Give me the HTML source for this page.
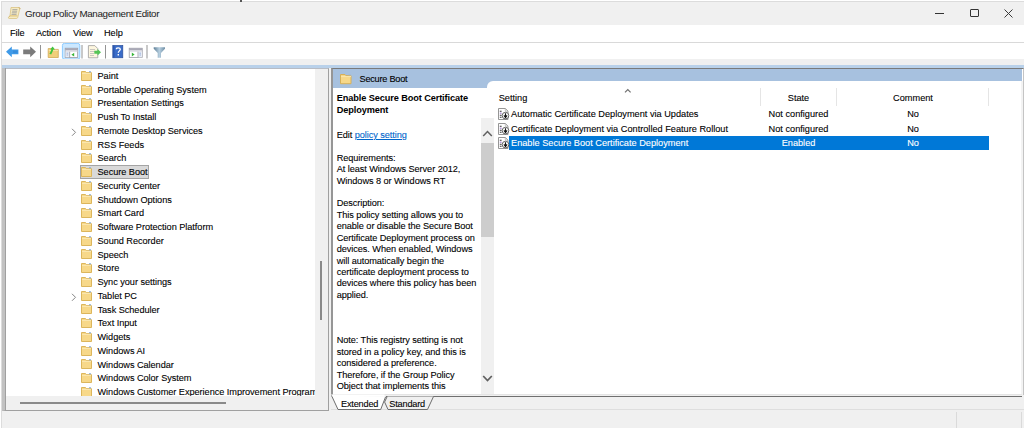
<!DOCTYPE html>
<html><head><meta charset="utf-8">
<style>
*{box-sizing:border-box;margin:0;padding:0}
html,body{width:1024px;height:428px;overflow:hidden;background:#fff;position:relative;font-family:"Liberation Sans",sans-serif;color:#000}
.a{position:absolute}
.t{position:absolute;white-space:nowrap;font-size:9.2px;letter-spacing:-0.05px;line-height:12px;-webkit-text-stroke:0.1px currentColor}
</style></head><body>
<!-- window frame -->
<div class="a" style="left:1px;top:1px;width:1023px;height:427px;background:#f0f0f0;border-left:1px solid #dcdcdc;border-top:1px solid #dcdcdc"></div>
<!-- title bar -->
<div class="a" style="left:2px;top:2px;width:1022px;height:23px;background:#f0f0f0"></div>
<div class="t" style="left:25px;top:7.6px;font-size:9.8px;letter-spacing:-0.34px;color:#1a1a1a;-webkit-text-stroke:0">Group Policy Management Editor</div>
<svg class="a" style="left:7px;top:6px" width="14" height="14" viewBox="7 6 14 14">
 <path d="M11 7.5h7.8c0.8 0 1.2 0.5 1 1.2l-2 8.6c-0.2 0.8 -0.8 1.2 -1.5 1.2H9.2c-0.8 0 -1 -0.6 -0.6 -1.2l1.4 -1.4z" fill="#f6ebc2" stroke="#d5bd78" stroke-width="0.7"/>
 <path d="M8.6 17.3c0.4 -1 1.4 -1.4 2.4 -1.4h6.4" fill="none" stroke="#d9b867" stroke-width="0.9"/>
 <path d="M12.4 9.6h5M12.1 11.2h5M11.8 12.8h5M11.5 14.4h5" stroke="#9a9a9a" stroke-width="0.8"/>
 <path d="M18.6 7.6c1 0 1.6 0.7 1.2 1.6" fill="none" stroke="#c9a55a" stroke-width="0.9"/>
</svg>
<div class="a" style="left:240px;top:0;width:2px;height:2px;background:#555"></div>
<!-- window controls -->
<div class="a" style="left:935px;top:13px;width:9px;height:1px;background:#333"></div>
<div class="a" style="left:970px;top:9px;width:9px;height:8px;border:1px solid #333;border-radius:1px"></div>
<svg class="a" style="left:1004px;top:9px" width="9" height="9"><path d="M0.5 0.5L8.5 8.5M8.5 0.5L0.5 8.5" stroke="#3a3a3a" stroke-width="1"/></svg>
<!-- menu bar -->
<div class="a" style="left:2px;top:25px;width:1022px;height:18px;background:#fff;border-bottom:1px solid #d9d9d9"></div>
<div class="t" style="left:10px;top:27px">File</div>
<div class="t" style="left:36px;top:27px">Action</div>
<div class="t" style="left:73px;top:27px">View</div>
<div class="t" style="left:104px;top:27px">Help</div>
<!-- toolbar -->
<div class="a" style="left:2px;top:43px;width:1022px;height:16px;background:#fff"></div>
<svg class="a" style="left:0;top:43px" width="172" height="17" viewBox="0 43 172 17">
<!-- back arrow -->
<path d="M6 51.8L11.8 46.6V49.6H18.4V54.2H11.8V57.2Z" fill="#3f9ae8"/>
<path d="M13 50.6h4.5v2.5h-4.5z" fill="#2f7fd0" opacity="0.5"/>
<!-- forward arrow -->
<path d="M36 51.8L30.2 46.6V49.6H23.2V54.2H30.2V57.2Z" fill="#7b7b7b"/>
<!-- sep -->
<rect x="40" y="45" width="1" height="13.5" fill="#939393"/>
<!-- folder up -->
<path d="M48.2 48.6h3.5l0.8 0.8h5.8v8.1h-10.1z" fill="#f1cf7a" stroke="#d2aa55" stroke-width="0.8"/>
<path d="M48.8 50.4h9.2" stroke="#f9e5ac" stroke-width="1"/>
<path d="M50.3 54.2C51 52.5 52.2 51.2 52.4 49" stroke="#40c540" stroke-width="2" fill="none"/>
<path d="M50.2 49.6L52.6 46.5L55 49.4Z" fill="#40c540"/>
<!-- highlighted button -->
<rect x="62.4" y="43.4" width="17.4" height="15.8" rx="2" fill="#cce8ff" stroke="#8ccbff" stroke-width="1"/>
<rect x="65.2" y="48.2" width="12.5" height="9.2" fill="#fff" stroke="#8f8f99" stroke-width="0.7"/>
<rect x="65.2" y="48.2" width="12.5" height="2.2" fill="#a9a9b6"/>
<rect x="65.5" y="50.4" width="12" height="1.3" fill="#d6d6de"/>
<rect x="65.6" y="51.8" width="3.6" height="5.4" fill="#e6ecf5"/>
<rect x="69.3" y="51.8" width="0.8" height="5.5" fill="#9a9aa6"/>
<path d="M66.6 53.2h1.6M66.6 55h1.6" stroke="#6f8fcf" stroke-width="0.6"/>
<path d="M74.2 52.8V56.6L71.4 54.7Z" fill="#3ab53a"/>
<!-- sep -->
<rect x="81.5" y="45" width="1" height="13.5" fill="#939393"/>
<!-- export list -->
<path d="M88.4 45.6h6.4l3 3v9.2h-9.4z" fill="#fdf6df" stroke="#9c9c9c" stroke-width="0.8"/>
<path d="M90 49.5h5M90 51.5h5M90 53.5h4M90 55.5h4" stroke="#b5b5b5" stroke-width="0.7"/>
<path d="M94.3 50.8h3.2v-1.8L101 52.3L97.5 55.6v-1.8h-3.2z" fill="#55c455"/>
<!-- sep -->
<rect x="105" y="45" width="1" height="13.5" fill="#939393"/>
<!-- help book -->
<rect x="112.8" y="45.5" width="10" height="12.3" fill="#3a6cc8" stroke="#2a4f9a" stroke-width="0.7"/>
<rect x="113.1" y="45.7" width="1.4" height="11.9" fill="#2a56b0"/>
<path d="M116.3 49.2C116.3 47.3 120.3 47.3 120.3 49.3C120.3 50.8 118.3 51 118.3 52.8" stroke="#fff" stroke-width="1.3" fill="none"/>
<rect x="117.6" y="54" width="1.4" height="1.5" fill="#fff"/>
<!-- action pane -->
<rect x="129.2" y="48.2" width="13" height="9.4" fill="#fff" stroke="#8f8f99" stroke-width="0.7"/>
<rect x="129.2" y="48.2" width="13" height="2.2" fill="#a9a9b6"/>
<rect x="129.5" y="50.4" width="12.5" height="1.3" fill="#d6d6de"/>
<rect x="138.4" y="51.8" width="3.5" height="5.5" fill="#e6ecf5"/>
<rect x="137.6" y="51.8" width="0.8" height="5.6" fill="#9a9aa6"/>
<path d="M139.4 53.2h1.6M139.4 55h1.6" stroke="#6f8fcf" stroke-width="0.6"/>
<path d="M131.8 52.6V56.4L134.6 54.5Z" fill="#3ab53a"/>
<!-- sep -->
<rect x="146.5" y="45" width="1" height="13.5" fill="#939393"/>
<!-- filter -->
<defs><linearGradient id="fg" x1="0" y1="0" x2="1" y2="0"><stop offset="0" stop-color="#5f7f96"/><stop offset="0.5" stop-color="#b7cfe0"/><stop offset="1" stop-color="#6f8ea5"/></linearGradient></defs>
<path d="M153.7 47.2h11.3v1.6l-4 4.2v4.8h-3.3v-4.8l-4-4.2z" fill="url(#fg)"/>
</svg>
<!-- gray strip + blue line -->
<div class="a" style="left:2px;top:59px;width:1022px;height:6px;background:#f0f0f0"></div>
<div class="a" style="left:2px;top:65px;width:1022px;height:3px;background:#b9d1ea"></div>

<!-- TREE PANE -->
<div class="a" style="left:2px;top:68px;width:327px;height:343px;background:#f0f0f0;border:1px solid #a0a0a0;border-left:4px solid #c2c2c2;border-top-color:#b8bcc4"></div>
<div class="a" style="left:5px;top:68px;width:1px;height:343px;background:#a0a0a0"></div>
<div class="a" style="left:6px;top:69px;width:309px;height:327px;background:#fff;overflow:hidden" id="tree"></div>
<div class="a" style="left:6px;top:69px;width:309px;height:327px;overflow:hidden"><div class="a" style="left:-6px;top:-69px;width:1024px;height:428px">
<!-- TREEITEMS -->
<svg class="a" style="left:81.00px;top:70.80px" width="11" height="10"><path d="M0.5 0.5h4l1 1.2h5v7.8h-10z" fill="#f7d889" stroke="#dcb65c"/><path d="M1 2.5h9" stroke="#fae6ae"/><path d="M8 0.8h2" stroke="#7fa7d6"/></svg>
<div class="t" style="left:97.5px;top:70.01px">Paint</div>
<svg class="a" style="left:81.00px;top:84.54px" width="11" height="10"><path d="M0.5 0.5h4l1 1.2h5v7.8h-10z" fill="#f7d889" stroke="#dcb65c"/><path d="M1 2.5h9" stroke="#fae6ae"/><path d="M8 0.8h2" stroke="#7fa7d6"/></svg>
<div class="t" style="left:97.5px;top:83.75px">Portable Operating System</div>
<svg class="a" style="left:81.00px;top:98.28px" width="11" height="10"><path d="M0.5 0.5h4l1 1.2h5v7.8h-10z" fill="#f7d889" stroke="#dcb65c"/><path d="M1 2.5h9" stroke="#fae6ae"/><path d="M8 0.8h2" stroke="#7fa7d6"/></svg>
<div class="t" style="left:97.5px;top:97.49px">Presentation Settings</div>
<svg class="a" style="left:81.00px;top:112.02px" width="11" height="10"><path d="M0.5 0.5h4l1 1.2h5v7.8h-10z" fill="#f7d889" stroke="#dcb65c"/><path d="M1 2.5h9" stroke="#fae6ae"/><path d="M8 0.8h2" stroke="#7fa7d6"/></svg>
<div class="t" style="left:97.5px;top:111.23px">Push To Install</div>
<svg class="a" style="left:81.00px;top:125.76px" width="11" height="10"><path d="M0.5 0.5h4l1 1.2h5v7.8h-10z" fill="#f7d889" stroke="#dcb65c"/><path d="M1 2.5h9" stroke="#fae6ae"/><path d="M8 0.8h2" stroke="#7fa7d6"/></svg>
<svg class="a" style="left:70.5px;top:127.66px" width="6" height="9"><path d="M1 0.8L4.5 4.3L1 7.8" fill="none" stroke="#858585" stroke-width="1"/></svg>
<div class="t" style="left:97.5px;top:124.97px">Remote Desktop Services</div>
<svg class="a" style="left:81.00px;top:139.50px" width="11" height="10"><path d="M0.5 0.5h4l1 1.2h5v7.8h-10z" fill="#f7d889" stroke="#dcb65c"/><path d="M1 2.5h9" stroke="#fae6ae"/><path d="M8 0.8h2" stroke="#7fa7d6"/></svg>
<div class="t" style="left:97.5px;top:138.71px">RSS Feeds</div>
<svg class="a" style="left:81.00px;top:153.24px" width="11" height="10"><path d="M0.5 0.5h4l1 1.2h5v7.8h-10z" fill="#f7d889" stroke="#dcb65c"/><path d="M1 2.5h9" stroke="#fae6ae"/><path d="M8 0.8h2" stroke="#7fa7d6"/></svg>
<div class="t" style="left:97.5px;top:152.45px">Search</div>
<div class="a" style="left:80px;top:165.18px;width:68.5px;height:13.7px;background:#d9d9d9;border:1px solid #a4a4a4"></div>
<svg class="a" style="left:81.00px;top:166.98px" width="11" height="10"><path d="M0.5 0.5h4l1 1.2h5v7.8h-10z" fill="#f7d889" stroke="#dcb65c"/><path d="M1 2.5h9" stroke="#fae6ae"/><path d="M8 0.8h2" stroke="#7fa7d6"/></svg>
<div class="t" style="left:97.5px;top:166.19px">Secure Boot</div>
<svg class="a" style="left:81.00px;top:180.72px" width="11" height="10"><path d="M0.5 0.5h4l1 1.2h5v7.8h-10z" fill="#f7d889" stroke="#dcb65c"/><path d="M1 2.5h9" stroke="#fae6ae"/><path d="M8 0.8h2" stroke="#7fa7d6"/></svg>
<div class="t" style="left:97.5px;top:179.93px">Security Center</div>
<svg class="a" style="left:81.00px;top:194.46px" width="11" height="10"><path d="M0.5 0.5h4l1 1.2h5v7.8h-10z" fill="#f7d889" stroke="#dcb65c"/><path d="M1 2.5h9" stroke="#fae6ae"/><path d="M8 0.8h2" stroke="#7fa7d6"/></svg>
<div class="t" style="left:97.5px;top:193.67px">Shutdown Options</div>
<svg class="a" style="left:81.00px;top:208.20px" width="11" height="10"><path d="M0.5 0.5h4l1 1.2h5v7.8h-10z" fill="#f7d889" stroke="#dcb65c"/><path d="M1 2.5h9" stroke="#fae6ae"/><path d="M8 0.8h2" stroke="#7fa7d6"/></svg>
<div class="t" style="left:97.5px;top:207.41px">Smart Card</div>
<svg class="a" style="left:81.00px;top:221.94px" width="11" height="10"><path d="M0.5 0.5h4l1 1.2h5v7.8h-10z" fill="#f7d889" stroke="#dcb65c"/><path d="M1 2.5h9" stroke="#fae6ae"/><path d="M8 0.8h2" stroke="#7fa7d6"/></svg>
<div class="t" style="left:97.5px;top:221.15px">Software Protection Platform</div>
<svg class="a" style="left:81.00px;top:235.68px" width="11" height="10"><path d="M0.5 0.5h4l1 1.2h5v7.8h-10z" fill="#f7d889" stroke="#dcb65c"/><path d="M1 2.5h9" stroke="#fae6ae"/><path d="M8 0.8h2" stroke="#7fa7d6"/></svg>
<div class="t" style="left:97.5px;top:234.89px">Sound Recorder</div>
<svg class="a" style="left:81.00px;top:249.42px" width="11" height="10"><path d="M0.5 0.5h4l1 1.2h5v7.8h-10z" fill="#f7d889" stroke="#dcb65c"/><path d="M1 2.5h9" stroke="#fae6ae"/><path d="M8 0.8h2" stroke="#7fa7d6"/></svg>
<div class="t" style="left:97.5px;top:248.63px">Speech</div>
<svg class="a" style="left:81.00px;top:263.16px" width="11" height="10"><path d="M0.5 0.5h4l1 1.2h5v7.8h-10z" fill="#f7d889" stroke="#dcb65c"/><path d="M1 2.5h9" stroke="#fae6ae"/><path d="M8 0.8h2" stroke="#7fa7d6"/></svg>
<div class="t" style="left:97.5px;top:262.37px">Store</div>
<svg class="a" style="left:81.00px;top:276.90px" width="11" height="10"><path d="M0.5 0.5h4l1 1.2h5v7.8h-10z" fill="#f7d889" stroke="#dcb65c"/><path d="M1 2.5h9" stroke="#fae6ae"/><path d="M8 0.8h2" stroke="#7fa7d6"/></svg>
<div class="t" style="left:97.5px;top:276.11px">Sync your settings</div>
<svg class="a" style="left:81.00px;top:290.64px" width="11" height="10"><path d="M0.5 0.5h4l1 1.2h5v7.8h-10z" fill="#f7d889" stroke="#dcb65c"/><path d="M1 2.5h9" stroke="#fae6ae"/><path d="M8 0.8h2" stroke="#7fa7d6"/></svg>
<svg class="a" style="left:70.5px;top:292.54px" width="6" height="9"><path d="M1 0.8L4.5 4.3L1 7.8" fill="none" stroke="#858585" stroke-width="1"/></svg>
<div class="t" style="left:97.5px;top:289.85px">Tablet PC</div>
<svg class="a" style="left:81.00px;top:304.38px" width="11" height="10"><path d="M0.5 0.5h4l1 1.2h5v7.8h-10z" fill="#f7d889" stroke="#dcb65c"/><path d="M1 2.5h9" stroke="#fae6ae"/><path d="M8 0.8h2" stroke="#7fa7d6"/></svg>
<div class="t" style="left:97.5px;top:303.59px">Task Scheduler</div>
<svg class="a" style="left:81.00px;top:318.12px" width="11" height="10"><path d="M0.5 0.5h4l1 1.2h5v7.8h-10z" fill="#f7d889" stroke="#dcb65c"/><path d="M1 2.5h9" stroke="#fae6ae"/><path d="M8 0.8h2" stroke="#7fa7d6"/></svg>
<div class="t" style="left:97.5px;top:317.33px">Text Input</div>
<svg class="a" style="left:81.00px;top:331.86px" width="11" height="10"><path d="M0.5 0.5h4l1 1.2h5v7.8h-10z" fill="#f7d889" stroke="#dcb65c"/><path d="M1 2.5h9" stroke="#fae6ae"/><path d="M8 0.8h2" stroke="#7fa7d6"/></svg>
<div class="t" style="left:97.5px;top:331.07px">Widgets</div>
<svg class="a" style="left:81.00px;top:345.60px" width="11" height="10"><path d="M0.5 0.5h4l1 1.2h5v7.8h-10z" fill="#f7d889" stroke="#dcb65c"/><path d="M1 2.5h9" stroke="#fae6ae"/><path d="M8 0.8h2" stroke="#7fa7d6"/></svg>
<div class="t" style="left:97.5px;top:344.81px">Windows AI</div>
<svg class="a" style="left:81.00px;top:359.34px" width="11" height="10"><path d="M0.5 0.5h4l1 1.2h5v7.8h-10z" fill="#f7d889" stroke="#dcb65c"/><path d="M1 2.5h9" stroke="#fae6ae"/><path d="M8 0.8h2" stroke="#7fa7d6"/></svg>
<div class="t" style="left:97.5px;top:358.55px">Windows Calendar</div>
<svg class="a" style="left:81.00px;top:373.08px" width="11" height="10"><path d="M0.5 0.5h4l1 1.2h5v7.8h-10z" fill="#f7d889" stroke="#dcb65c"/><path d="M1 2.5h9" stroke="#fae6ae"/><path d="M8 0.8h2" stroke="#7fa7d6"/></svg>
<div class="t" style="left:97.5px;top:372.29px">Windows Color System</div>
<svg class="a" style="left:81.00px;top:386.82px" width="11" height="10"><path d="M0.5 0.5h4l1 1.2h5v7.8h-10z" fill="#f7d889" stroke="#dcb65c"/><path d="M1 2.5h9" stroke="#fae6ae"/><path d="M8 0.8h2" stroke="#7fa7d6"/></svg>
<div class="t" style="left:97.5px;top:386.03px">Windows Customer Experience Improvement Program</div>
<!-- /TREEITEMS -->
</div></div>
<!-- tree v scrollbar thumb -->
<div class="a" style="left:320px;top:261px;width:2px;height:59px;background:#8a8a8a"></div>
<!-- tree h scrollbar thumb -->
<div class="a" style="left:20px;top:402px;width:206px;height:2px;background:#8a8a8a"></div>

<!-- RIGHT PANE -->
<div class="a" style="left:331px;top:68px;width:693px;height:327px;background:#fff;border-left:2px solid #969696;border-top:1px solid #7a7a7a;border-right:1px solid #c4c4c4"></div>
<div class="a" style="left:1021px;top:81px;width:2px;height:314px;background:#f3f3f3"></div>
<div class="a" style="left:333px;top:69px;width:689px;height:12px;background:#a7c1df"></div>
<div class="a" style="left:333px;top:81px;width:154px;height:7px;background:#a7c1df"></div>
<div class="a" style="left:487px;top:81px;width:10px;height:7px;background:#a7c1df"></div>
<div class="a" style="left:487px;top:81px;width:20px;height:20px;background:#fff;border-top-left-radius:6px"></div>


<!-- header -->
<svg class="a" style="left:340px;top:73.5px" width="12" height="11"><path d="M0.5 0.5h4.5l1 1.2h5v8h-10.5z" fill="#f7d889" stroke="#d6b05a"/><path d="M1 2.6h10" stroke="#fae6ae"/><path d="M8.5 0.9h2.5" stroke="#9fb9d9"/></svg>
<div class="t" style="left:359.5px;top:73px;letter-spacing:-0.25px">Secure Boot</div>
<!-- description pane -->
<div class="a" style="left:333px;top:88px;width:148px;height:307px;overflow:hidden">
 <div class="a" style="left:-333px;top:-88px;width:800px;height:500px">
  <div class="t" style="left:336.7px;top:93px;font-weight:bold;line-height:11.5px;letter-spacing:-0.1px;-webkit-text-stroke:0">Enable Secure Boot Certificate<br>Deployment</div>
  <div class="t" style="left:336.7px;top:129.9px;line-height:11.42px;letter-spacing:-0.07px">Edit <span style="color:#0066cc;text-decoration:underline">policy setting </span><br><br>Requirements:<br>At least Windows Server 2012,<br>Windows 8 or Windows RT<br><br>Description:<br>This policy setting allows you to<br>enable or disable the Secure Boot<br>Certificate Deployment process on<br>devices. When enabled, Windows<br>will automatically begin the<br>certificate deployment process to<br>devices where this policy has been<br>applied.<br><br><br><br>Note: This registry setting is not<br>stored in a policy key, and this is<br>considered a preference.<br>Therefore, if the Group Policy<br>Object that implements this<br>setting is removed, this setting will</div>
 </div>
</div>
<!-- desc scrollbar -->
<div class="a" style="left:481px;top:117.5px;width:13px;height:277px;background:#f0f0f0"></div>
<div class="a" style="left:481px;top:143px;width:13px;height:94px;background:#cdcdcd"></div>
<svg class="a" style="left:482px;top:129px" width="11" height="9"><path d="M1.2 7L5.5 2.6L9.8 7" fill="none" stroke="#606060" stroke-width="1.5"/></svg>
<svg class="a" style="left:482px;top:373.5px" width="11" height="9"><path d="M1.2 2L5.5 6.6L9.8 2" fill="none" stroke="#606060" stroke-width="1.7"/></svg>
<!-- list header -->
<div class="t" style="left:498.7px;top:91.7px;letter-spacing:0px">Setting</div>
<svg class="a" style="left:624px;top:87.5px" width="8" height="6"><path d="M1 4.3L3.8 1.5L6.6 4.3" fill="none" stroke="#707070" stroke-width="1.2"/></svg>
<div class="t" style="left:760px;top:91.7px;width:77px;text-align:center;letter-spacing:0px">State</div>
<div class="t" style="left:837px;top:91.7px;width:152px;text-align:center;letter-spacing:0px">Comment</div>
<div class="a" style="left:760px;top:88px;width:1px;height:18px;background:#e5e5e5"></div>
<div class="a" style="left:836px;top:88px;width:1px;height:18px;background:#e5e5e5"></div>
<div class="a" style="left:988px;top:88px;width:1px;height:18px;background:#e5e5e5"></div>
<!-- rows -->
<div class="a" style="left:509px;top:135.5px;width:480px;height:14.5px;background:#0078d7"></div>
<!-- ROWS -->
<svg class="a" style="left:498px;top:108.00px" width="12" height="12" viewBox="0 0 12 12"><path d="M0.5 0.5h6.8l2.7 2.7v8.3h-9.5z" fill="#fff" stroke="#8a8a8a" stroke-width="0.9"/><path d="M7.3 0.5v2.7h2.7" fill="none" stroke="#b0b0b0" stroke-width="0.7"/><path d="M1.8 3.2h1.8M1.8 7.2h1.8M1.8 9.2h1.8" stroke="#333" stroke-width="1.1"/><path d="M1.8 5.2h1.8" stroke="#9a6fd0" stroke-width="1"/><circle cx="7.5" cy="7.6" r="3.3" fill="#fff" stroke="#555" stroke-width="0.9"/><path d="M7.5 5.2v3.6M5.9 7.4L7.5 9.6L9.1 7.4" stroke="#111" stroke-width="1.1" fill="none"/></svg>
<div class="t" style="left:511px;top:108.21px;color:#000;letter-spacing:0px">Automatic Certificate Deployment via Updates</div>
<div class="t" style="left:760px;top:108.21px;width:77px;text-align:center;color:#000;letter-spacing:0px">Not configured</div>
<div class="t" style="left:837px;top:108.21px;width:152px;text-align:center;color:#000;letter-spacing:0px">No</div>
<svg class="a" style="left:498px;top:122.50px" width="12" height="12" viewBox="0 0 12 12"><path d="M0.5 0.5h6.8l2.7 2.7v8.3h-9.5z" fill="#fff" stroke="#8a8a8a" stroke-width="0.9"/><path d="M7.3 0.5v2.7h2.7" fill="none" stroke="#b0b0b0" stroke-width="0.7"/><path d="M1.8 3.2h1.8M1.8 7.2h1.8M1.8 9.2h1.8" stroke="#333" stroke-width="1.1"/><path d="M1.8 5.2h1.8" stroke="#9a6fd0" stroke-width="1"/><circle cx="7.5" cy="7.6" r="3.3" fill="#fff" stroke="#555" stroke-width="0.9"/><path d="M7.5 5.2v3.6M5.9 7.4L7.5 9.6L9.1 7.4" stroke="#111" stroke-width="1.1" fill="none"/></svg>
<div class="t" style="left:511px;top:122.71px;color:#000;letter-spacing:0px">Certificate Deployment via Controlled Feature Rollout</div>
<div class="t" style="left:760px;top:122.71px;width:77px;text-align:center;color:#000;letter-spacing:0px">Not configured</div>
<div class="t" style="left:837px;top:122.71px;width:152px;text-align:center;color:#000;letter-spacing:0px">No</div>
<svg class="a" style="left:498px;top:137.00px" width="12" height="12" viewBox="0 0 12 12"><path d="M0.5 0.5h6.8l2.7 2.7v8.3h-9.5z" fill="#fff" stroke="#8a8a8a" stroke-width="0.9"/><path d="M7.3 0.5v2.7h2.7" fill="none" stroke="#b0b0b0" stroke-width="0.7"/><path d="M1.8 3.2h1.8M1.8 7.2h1.8M1.8 9.2h1.8" stroke="#333" stroke-width="1.1"/><path d="M1.8 5.2h1.8" stroke="#9a6fd0" stroke-width="1"/><circle cx="7.5" cy="7.6" r="3.3" fill="#fff" stroke="#555" stroke-width="0.9"/><path d="M7.5 5.2v3.6M5.9 7.4L7.5 9.6L9.1 7.4" stroke="#111" stroke-width="1.1" fill="none"/></svg>
<div class="t" style="left:511px;top:137.21px;color:#fff;letter-spacing:0px">Enable Secure Boot Certificate Deployment</div>
<div class="t" style="left:760px;top:137.21px;width:77px;text-align:center;color:#fff;letter-spacing:0px">Enabled</div>
<div class="t" style="left:837px;top:137.21px;width:152px;text-align:center;color:#fff;letter-spacing:0px">No</div>
<!-- /ROWS -->
<!-- tab strip -->
<svg class="a" style="left:326px;top:390px" width="698" height="38" viewBox="326 390 698 38">
 <rect x="331" y="394.5" width="692" height="15.5" fill="#f0f0f0"/>
 <path d="M333 394.5H1022" stroke="#e4e4e4" stroke-width="1"/>
 <path d="M386 396.5H1022" stroke="#707070" stroke-width="1"/>
 <path d="M331 409.5H1024" stroke="#dedede" stroke-width="1"/>
 <path d="M956.5 412V428M1021.5 412V428" stroke="#dadada" stroke-width="1"/>
 <path d="M387.2 396.5L384.6 402L388 409.5H427.5L433.5 396.5" fill="#f0f0f0" stroke="#6e6e6e" stroke-width="1"/>
 <path d="M331.5 395.5L338 409.5H380.7L385.6 396.8" fill="#fff" stroke="#6e6e6e" stroke-width="1"/>
 <rect x="332.5" y="394.5" width="52" height="2" fill="#fff"/>
</svg>
<div class="t" style="left:341px;top:397.5px;letter-spacing:-0.2px">Extended</div>
<div class="t" style="left:389.3px;top:397.5px;letter-spacing:-0.2px">Standard</div>
</body></html>
